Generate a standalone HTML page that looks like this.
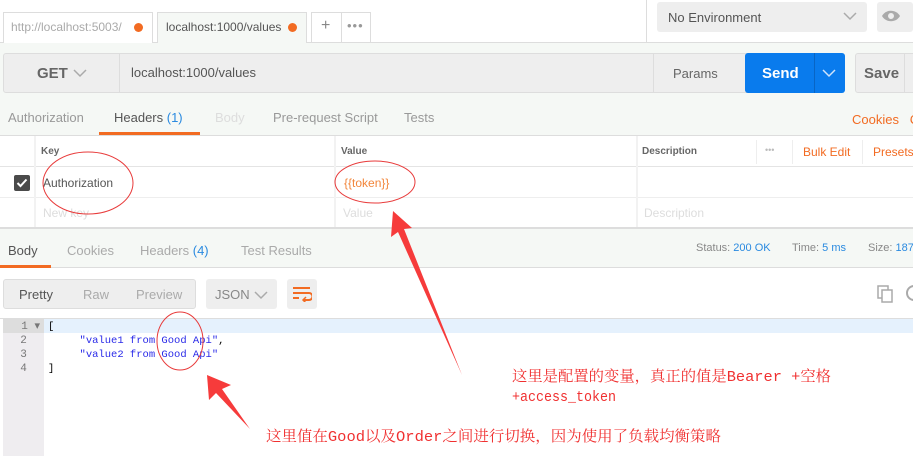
<!DOCTYPE html>
<html><head><meta charset="utf-8"><style>
*{box-sizing:border-box;margin:0;padding:0}
body{width:913px;height:456px;overflow:hidden;background:#fff;font-family:"Liberation Sans","Noto Sans CJK SC",sans-serif;font-size:12px;color:#505050;position:relative}
.a{position:absolute;white-space:nowrap}
</style></head><body>
<!-- top bar -->
<div class="a" style="left:0;top:0;width:913px;height:43px;background:#fff;border-bottom:1px solid #ddd"></div>
<div class="a" style="left:3px;top:12px;width:150px;height:31px;border:1px solid #ddd;border-bottom:none;background:#fff"></div>
<div class="a" style="left:11px;top:20px;color:#aaa;font-size:12px">http://localhost:5003/</div>
<div class="a" style="left:134px;top:23px;width:9px;height:9px;border-radius:50%;background:#f26b22"></div>
<div class="a" style="left:157px;top:12px;width:150px;height:32px;border:1px solid #ddd;border-bottom:none;background:#f5f8f5"></div>
<div class="a" style="left:166px;top:20px;color:#555">localhost:1000/values</div>
<div class="a" style="left:288px;top:23px;width:9px;height:9px;border-radius:50%;background:#f26b22"></div>
<div class="a" style="left:311px;top:12px;width:60px;height:31px;border:1px solid #ddd;border-bottom:none"></div>
<div class="a" style="left:341px;top:12px;width:1px;height:31px;background:#ddd"></div>
<div class="a" style="left:321px;top:17px;color:#888;font-size:16px">+</div>
<div class="a" style="left:347px;top:18px;color:#999;font-size:13px;letter-spacing:1px">•••</div>
<div class="a" style="left:646px;top:0;width:1px;height:42px;background:#ddd"></div>
<div class="a" style="left:657px;top:2px;width:210px;height:30px;background:#eee;border-radius:3px"></div>
<div class="a" style="left:668px;top:10px;color:#555;font-size:13px">No Environment</div>
<svg class="a" style="left:843px;top:12px" width="14" height="9"><path d="M1 1l6 6 6-6" stroke="#aaa" fill="none" stroke-width="1.5"/></svg>
<div class="a" style="left:877px;top:2px;width:36px;height:30px;background:#eee;border-radius:3px"></div>
<svg class="a" style="left:880px;top:8px" width="22" height="16"><path d="M2 8c4-7 14-7 18 0c-4 7-14 7-18 0z" fill="#aaa"/><circle cx="11" cy="8" r="3" fill="#eee"/></svg>
<!-- request area bg -->
<div class="a" style="left:0;top:43px;width:913px;height:92px;background:#f5f8f5"></div>
<div class="a" style="left:3px;top:53px;width:276px;height:40px;background:#eee;border:1px solid #ddd;border-radius:3px 0 0 3px"></div>
<div class="a" style="left:119px;top:53px;width:535px;height:40px;background:#eee;border:1px solid #ddd"></div>
<div class="a" style="left:653px;top:53px;width:126px;height:40px;background:#eee;border:1px solid #ddd;border-radius:0 3px 3px 0"></div>
<div class="a" style="left:37px;top:65px;color:#666;font-size:15px;font-weight:bold">GET</div>
<svg class="a" style="left:73px;top:69px" width="14" height="9"><path d="M1 1l6 6 6-6" stroke="#aaa" fill="none" stroke-width="1.5"/></svg>
<div class="a" style="left:131px;top:65px;color:#555;font-size:13px">localhost:1000/values</div>
<div class="a" style="left:673px;top:66px;color:#666;font-size:13px">Params</div>
<div class="a" style="left:745px;top:53px;width:100px;height:40px;background:#097bed;border-radius:3px"></div>
<div class="a" style="left:814px;top:53px;width:1px;height:40px;background:#0865c5"></div>
<div class="a" style="left:762px;top:65px;color:#fff;font-size:15px;font-weight:bold">Send</div>
<svg class="a" style="left:822px;top:69px" width="14" height="9"><path d="M1 1l6 6 6-6" stroke="#cfe3fb" fill="none" stroke-width="1.5"/></svg>
<div class="a" style="left:855px;top:53px;width:70px;height:40px;background:#eee;border:1px solid #ddd;border-radius:3px"></div>
<div class="a" style="left:904px;top:53px;width:1px;height:40px;background:#ddd"></div>
<div class="a" style="left:864px;top:65px;color:#666;font-size:15px;font-weight:bold">Save</div>
<!-- request tabs -->
<div class="a" style="left:8px;top:110px;color:#999;font-size:13px">Authorization</div>
<div class="a" style="left:114px;top:110px;color:#555;font-size:13px">Headers <span style="color:#2a8ae0">(1)</span></div>
<div class="a" style="left:99px;top:132px;width:101px;height:3px;background:#f26b22"></div>
<div class="a" style="left:215px;top:110px;color:#ddd;font-size:13px">Body</div>
<div class="a" style="left:273px;top:110px;color:#999;font-size:13px">Pre-request Script</div>
<div class="a" style="left:404px;top:110px;color:#999;font-size:13px">Tests</div>
<div class="a" style="left:852px;top:112px;color:#f26b22;font-size:13px">Cookies&nbsp;&nbsp;&nbsp;Code</div>
<!-- table -->
<div class="a" style="left:0;top:135px;width:913px;height:1px;background:#ddd"></div>
<div class="a" style="left:0;top:166px;width:913px;height:1px;background:#e4e4e4"></div>
<div class="a" style="left:0;top:197px;width:913px;height:1px;background:#eee"></div>
<div class="a" style="left:0;top:227px;width:913px;height:2px;background:#ddd"></div>
<div class="a" style="left:34px;top:136px;width:2px;height:91px;background:#f2f2f2"></div>
<div class="a" style="left:334px;top:136px;width:2px;height:91px;background:#f2f2f2"></div>
<div class="a" style="left:636px;top:136px;width:2px;height:91px;background:#f2f2f2"></div>
<div class="a" style="left:756px;top:140px;width:1px;height:24px;background:#eee"></div>
<div class="a" style="left:792px;top:140px;width:1px;height:24px;background:#eee"></div>
<div class="a" style="left:862px;top:140px;width:1px;height:24px;background:#eee"></div>
<div class="a" style="left:41px;top:146px;color:#666;font-size:10px;font-weight:bold">Key</div>
<div class="a" style="left:341px;top:146px;color:#666;font-size:10px;font-weight:bold">Value</div>
<div class="a" style="left:642px;top:146px;color:#666;font-size:10px;font-weight:bold">Description</div>
<div class="a" style="left:765px;top:145px;color:#bbb;font-size:9px">•••</div>
<div class="a" style="left:803px;top:145px;color:#f26b22;font-size:12px">Bulk Edit</div>
<div class="a" style="left:873px;top:145px;color:#f26b22;font-size:12px">Presets</div>
<div class="a" style="left:14px;top:175px;width:16px;height:16px;background:#4a4a4a;border-radius:2px"></div>
<svg class="a" style="left:16px;top:178px" width="12" height="10"><path d="M1.5 5l3 3 6-6.5" stroke="#fff" fill="none" stroke-width="2"/></svg>
<div class="a" style="left:43px;top:176px;color:#555;font-size:12px">Authorization</div>
<div class="a" style="left:344px;top:176px;color:#f2853a;font-size:12px">{{token}}</div>
<div class="a" style="left:43px;top:206px;color:#ddd;font-size:12px">New key</div>
<div class="a" style="left:343px;top:206px;color:#ddd;font-size:12px">Value</div>
<div class="a" style="left:644px;top:206px;color:#ddd;font-size:12px">Description</div>
<!-- response tabs -->
<div class="a" style="left:0;top:229px;width:913px;height:39px;background:#f5f8f5;border-bottom:1px solid #ddd"></div>
<div class="a" style="left:8px;top:243px;color:#555;font-size:13px">Body</div>
<div class="a" style="left:0;top:265px;width:51px;height:3px;background:#f26b22"></div>
<div class="a" style="left:67px;top:243px;color:#aaa;font-size:13px">Cookies</div>
<div class="a" style="left:140px;top:243px;color:#aaa;font-size:13px">Headers <span style="color:#2a8ae0">(4)</span></div>
<div class="a" style="left:241px;top:243px;color:#aaa;font-size:13px">Test Results</div>
<div class="a" style="left:696px;top:242px;color:#888;font-size:11px">Status: <span style="color:#2a8ae0">200 OK</span></div>
<div class="a" style="left:792px;top:242px;color:#888;font-size:11px">Time: <span style="color:#2a8ae0">5 ms</span></div>
<div class="a" style="left:868px;top:242px;color:#888;font-size:11px">Size: <span style="color:#2a8ae0">187 B</span></div>
<!-- format bar -->
<div class="a" style="left:3px;top:279px;width:193px;height:30px;background:#eee;border:1px solid #ddd;border-radius:3px"></div>
<div class="a" style="left:19px;top:287px;color:#555;font-size:13px">Pretty</div>
<div class="a" style="left:83px;top:287px;color:#aaa;font-size:13px">Raw</div>
<div class="a" style="left:136px;top:287px;color:#aaa;font-size:13px">Preview</div>
<div class="a" style="left:206px;top:279px;width:71px;height:30px;background:#eee;border-radius:3px"></div>
<div class="a" style="left:215px;top:287px;color:#888;font-size:13px">JSON</div>
<svg class="a" style="left:254px;top:291px" width="14" height="9"><path d="M1 1l6 6 6-6" stroke="#aaa" fill="none" stroke-width="1.5"/></svg>
<div class="a" style="left:287px;top:279px;width:30px;height:30px;background:#eee;border-radius:3px"></div>
<svg class="a" style="left:292px;top:286px" width="20" height="16"><path d="M1 2h17M1 7h16a3.5 3.5 0 0 1 0 7h-5M1 12h6" stroke="#f26b22" fill="none" stroke-width="2"/><path d="M14 11l-3 3 3 3" stroke="#f26b22" fill="none" stroke-width="1.5"/></svg>
<svg class="a" style="left:877px;top:285px" width="18" height="18"><rect x="1" y="1" width="10" height="12" fill="none" stroke="#aaa" stroke-width="1.5"/><rect x="5" y="5" width="10" height="12" fill="#fff" stroke="#aaa" stroke-width="1.5"/></svg>
<div class="a" style="left:906px;top:285px;width:16px;height:16px;border:2px solid #aaa;border-radius:50%"></div>
<!-- editor -->
<div class="a" style="left:0;top:318px;width:913px;height:1px;background:#ddd"></div>
<div class="a" style="left:3px;top:319px;width:41px;height:137px;background:#efedf0"></div>
<div class="a" style="left:3px;top:319px;width:41px;height:14px;background:#ddd"></div>
<div class="a" style="left:44px;top:319px;width:869px;height:14px;background:#e5f1fd"></div>
<div class="a" style="left:0;top:320px;width:40px;font-family:'Liberation Mono',monospace;font-size:11px;line-height:14px;color:#777;text-align:right">1 ▾<br>2&nbsp;&nbsp;<br>3&nbsp;&nbsp;<br>4&nbsp;&nbsp;</div>
<div class="a" style="left:48px;top:320px;font-family:'Liberation Mono',monospace;font-size:10.5px;line-height:14px;color:#000;white-space:pre">[
     <span style="color:#2a2ae8">"value1 from Good Api"</span>,
     <span style="color:#2a2ae8">"value2 from Good Api"</span>
]</div>
<!-- annotations -->
<svg class="a" style="left:0;top:0" width="913" height="456">
<g fill="none" stroke="#e83a3a" stroke-width="1">
<ellipse cx="88" cy="183" rx="45" ry="31"/>
<ellipse cx="375" cy="182" rx="40" ry="21"/>
<ellipse cx="180" cy="341" rx="23" ry="29"/>
</g>
<polygon points="393,211 391,237 398,232 462,375 404,229 412,228" fill="#f63b3b"/>
<polygon points="207,375 209,400 216,393 250,429 222,389 231,385" fill="#f63b3b"/>
<g font-family="'Liberation Mono','Noto Serif CJK SC',serif" font-size="15" fill="#f03030">
<text x="512" y="381" textLength="319" lengthAdjust="spacingAndGlyphs">这里是配置的变量，真正的值是Bearer +空格</text>
<text x="512" y="401" textLength="104" lengthAdjust="spacingAndGlyphs">+access_token</text>
<text x="266" y="441" textLength="455" lengthAdjust="spacingAndGlyphs">这里值在Good以及Order之间进行切换，因为使用了负载均衡策略</text>
</g>
</svg>
</body></html>
